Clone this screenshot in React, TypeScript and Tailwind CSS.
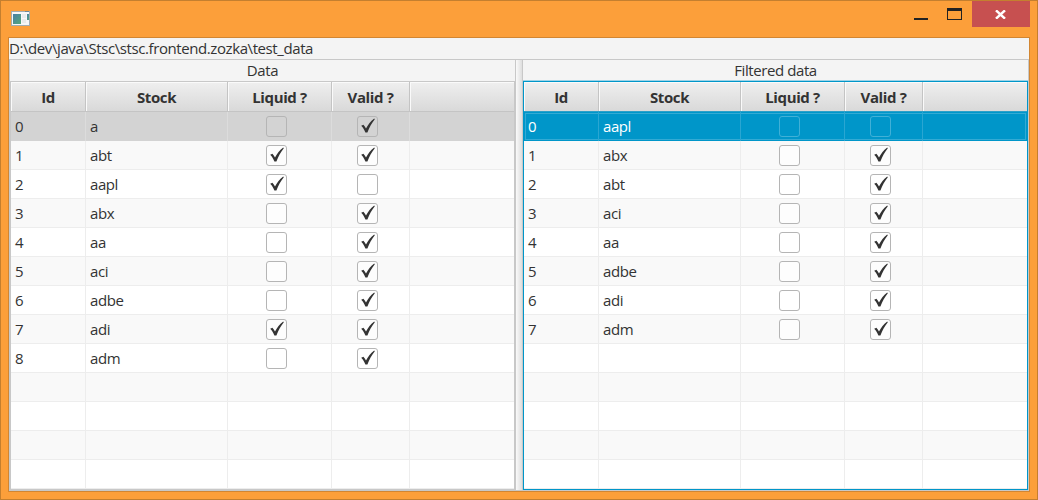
import React from "react";

type Row = { id: number; stock: string; liquid: boolean; valid: boolean };

const dataRows: Row[] = [
  { id: 0, stock: "a", liquid: false, valid: true },
  { id: 1, stock: "abt", liquid: true, valid: true },
  { id: 2, stock: "aapl", liquid: true, valid: false },
  { id: 3, stock: "abx", liquid: false, valid: true },
  { id: 4, stock: "aa", liquid: false, valid: true },
  { id: 5, stock: "aci", liquid: false, valid: true },
  { id: 6, stock: "adbe", liquid: false, valid: true },
  { id: 7, stock: "adi", liquid: true, valid: true },
  { id: 8, stock: "adm", liquid: false, valid: true },
];

const filteredRows: Row[] = [
  { id: 0, stock: "aapl", liquid: false, valid: false },
  { id: 1, stock: "abx", liquid: false, valid: true },
  { id: 2, stock: "abt", liquid: false, valid: true },
  { id: 3, stock: "aci", liquid: false, valid: true },
  { id: 4, stock: "aa", liquid: false, valid: true },
  { id: 5, stock: "adbe", liquid: false, valid: true },
  { id: 6, stock: "adi", liquid: false, valid: true },
  { id: 7, stock: "adm", liquid: false, valid: true },
];

const columns = [
  { label: "Id", width: "w-[75px]" },
  { label: "Stock", width: "w-[142px]" },
  { label: "Liquid ?", width: "w-[104px]" },
  { label: "Valid ?", width: "w-[78px]" },
  { label: "", width: "flex-1" },
];

const ROW_COUNT = 13;

function Check({ checked, border }: { checked: boolean; border: string }) {
  return (
    <span className={`mr-[6px] mb-px flex size-[21px] items-center justify-center rounded-[3px] border ${border}`}>
      {checked && (
        <svg width="19" height="19" viewBox="0 0 19 19" fill="#333">
          <path d="M3.2 8.8 L5.4 7.8 C6.4 9 7.2 10.2 8 11.6 C9.8 7.8 12.4 4.4 16.2 1.4 L16.8 2.2 C13.8 5.8 11.4 10.4 9.4 15.6 L7.4 15.6 C6.5 13 5.2 10.8 3.2 8.8Z" />
        </svg>
      )}
    </span>
  );
}

function Table({ rows, focused }: { rows: Row[]; focused?: boolean }) {
  return (
    <div className={`flex flex-1 flex-col border ${focused ? "border-[#0096c9]" : "border-[#c8c8c8]"}`}>
      <div className={`flex h-[30px] shrink-0 border-b ${focused ? "border-[#2b9fc8]" : "border-[#c4c4c4]"}`}>
        {columns.map((c, i) => (
          <div
            key={i}
            className={`flex items-center justify-center bg-linear-to-b from-[#efefef] to-[#d9d9d9] pt-px text-[15px] font-bold tracking-[-0.38px] shadow-[inset_1px_1px_0_#fafafa] ${c.width} ${i < 4 ? "border-r border-[#c4c4c4]" : ""}`}
          >
            {c.label}
          </div>
        ))}
      </div>
      {Array.from({ length: ROW_COUNT }, (_, i) => {
        const row = rows[i];
        const selected = i === 0;
        const blue = selected && focused;
        const bg = blue
          ? "bg-[#0096c9] text-white"
          : selected
            ? "bg-[#d3d3d3]"
            : i % 2
              ? "bg-[#f9f9f9]"
              : "bg-white";
        const line = blue ? "border-[#2aa6d2]" : selected ? "border-[#dcdcdc]" : "border-[#ededed]";
        const box = blue ? "border-[#40b0d7]" : selected ? "border-[#b5b5b5]" : "border-[#b5b5b5] bg-white/60";
        const textPad = selected ? "pb-[2px] pl-1" : "pb-px pl-1";
        const boxPad = selected ? "justify-center" : "justify-center pt-px";
        return (
          <div
            key={i}
            className={`flex h-[29px] shrink-0 ${bg} ${blue ? "shadow-[inset_0_0_0_1px_#0096c9,inset_0_0_0_2px_#33aad4]" : ""}`}
          >
            {columns.map((c, j) => (
              <div
                key={j}
                className={`flex items-center ${c.width} ${line} ${j < 4 ? "border-r" : ""} ${selected ? "" : "border-b"} ${j > 1 ? boxPad : textPad}`}
              >
                {row && j === 0 && row.id}
                {row && j === 1 && row.stock}
                {row && j === 2 && <Check checked={row.liquid} border={box} />}
                {row && j === 3 && <Check checked={row.valid} border={box} />}
              </div>
            ))}
          </div>
        );
      })}
    </div>
  );
}

export default function App() {
  return (
    <div className="flex h-[500px] w-[1038px] flex-col border border-[#c47f2f] bg-[#fc9f3a] font-['Open_Sans','Noto_Sans',sans-serif] text-[15px] leading-5 tracking-[-0.41px] text-[#333]">
      <div className="flex h-9 shrink-0 items-start justify-between pr-[7px] pl-[10px]">
        <svg className="mt-[10px]" width="19" height="16" viewBox="0 0 19 16">
          <defs>
            <linearGradient id="pane" x1="0" y1="0" x2="1" y2="1">
              <stop offset="0" stopColor="#4a7fa8" />
              <stop offset="1" stopColor="#55a878" />
            </linearGradient>
          </defs>
          <rect x="0.5" y="0.5" width="18" height="14" fill="#f6f7f8" stroke="#a3acb0" />
          <rect x="2" y="3" width="8" height="10" fill="url(#pane)" />
          <rect x="11" y="3" width="4" height="4" fill="#e9ebec" />
          <rect x="11" y="8" width="4" height="4" fill="#e9ebec" />
          <rect x="16" y="3" width="2" height="6" fill="url(#pane)" />
          <rect x="14" y="0" width="4" height="1" fill="#6e8796" />
        </svg>
        <div className="flex items-start">
          <svg width="58" height="26" viewBox="0 0 58 26" shapeRendering="crispEdges" fill="#222">
            <rect x="0" y="17" width="14" height="2" />
            <path d="M33 7h15v12h-15zM34 10v8h13v-8z" fillRule="evenodd" />
          </svg>
          <div className="flex h-[26px] w-[58px] items-center justify-center bg-[#c75050]">
            <svg className="mr-px" width="11" height="9" viewBox="0 0 11 9" stroke="#fff" strokeWidth="2.4">
              <path d="M1 .3 L10 8.7 M10 .3 L1 8.7" />
            </svg>
          </div>
        </div>
      </div>
      <div className="mx-[7px] flex h-[455px] flex-col border border-[#d28632] bg-[#f4f4f4]">
        <div className="h-[21px] shrink-0 whitespace-nowrap">D:\dev\java\Stsc\stsc.frontend.zozka\test_data</div>
        <div className="flex flex-1 border border-[#c8c8c8]">
          <div className="flex w-[505px] flex-col">
            <div className="flex h-[21px] items-center justify-center pb-[2px]">Data</div>
            <Table rows={dataRows} />
          </div>
          <div className="w-[8px] border-x border-[#c8c8c8] bg-linear-to-r from-[#fafafa] to-[#dedede]" />
          <div className="flex flex-1 flex-col">
            <div className="flex h-[21px] items-center justify-center border-b border-[#9fd3e6] pb-px">Filtered data</div>
            <Table rows={filteredRows} focused />
          </div>
        </div>
      </div>
    </div>
  );
}
